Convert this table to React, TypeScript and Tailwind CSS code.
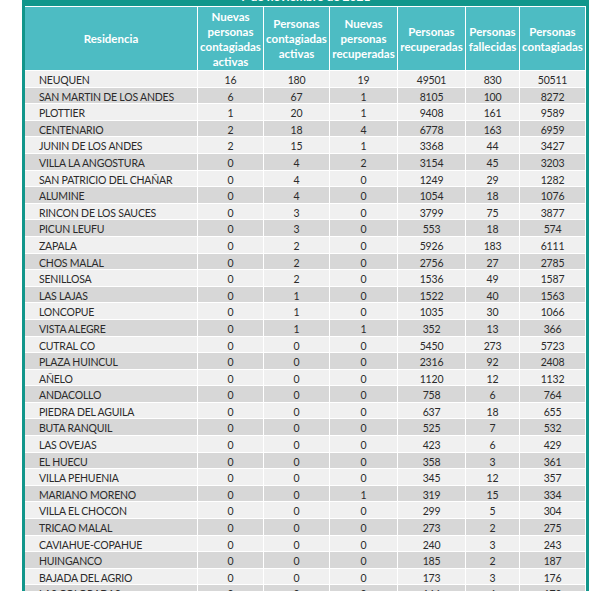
import React from "react";

const rows: [string, number, number, number, number, number, number][] = [
  ["NEUQUEN", 16, 180, 19, 49501, 830, 50511],
  ["SAN MARTIN DE LOS ANDES", 6, 67, 1, 8105, 100, 8272],
  ["PLOTTIER", 1, 20, 1, 9408, 161, 9589],
  ["CENTENARIO", 2, 18, 4, 6778, 163, 6959],
  ["JUNIN DE LOS ANDES", 2, 15, 1, 3368, 44, 3427],
  ["VILLA LA ANGOSTURA", 0, 4, 2, 3154, 45, 3203],
  ["SAN PATRICIO DEL CHAÑAR", 0, 4, 0, 1249, 29, 1282],
  ["ALUMINE", 0, 4, 0, 1054, 18, 1076],
  ["RINCON DE LOS SAUCES", 0, 3, 0, 3799, 75, 3877],
  ["PICUN LEUFU", 0, 3, 0, 553, 18, 574],
  ["ZAPALA", 0, 2, 0, 5926, 183, 6111],
  ["CHOS MALAL", 0, 2, 0, 2756, 27, 2785],
  ["SENILLOSA", 0, 2, 0, 1536, 49, 1587],
  ["LAS LAJAS", 0, 1, 0, 1522, 40, 1563],
  ["LONCOPUE", 0, 1, 0, 1035, 30, 1066],
  ["VISTA ALEGRE", 0, 1, 1, 352, 13, 366],
  ["CUTRAL CO", 0, 0, 0, 5450, 273, 5723],
  ["PLAZA HUINCUL", 0, 0, 0, 2316, 92, 2408],
  ["AÑELO", 0, 0, 0, 1120, 12, 1132],
  ["ANDACOLLO", 0, 0, 0, 758, 6, 764],
  ["PIEDRA DEL AGUILA", 0, 0, 0, 637, 18, 655],
  ["BUTA RANQUIL", 0, 0, 0, 525, 7, 532],
  ["LAS OVEJAS", 0, 0, 0, 423, 6, 429],
  ["EL HUECU", 0, 0, 0, 358, 3, 361],
  ["VILLA PEHUENIA", 0, 0, 0, 345, 12, 357],
  ["MARIANO MORENO", 0, 0, 1, 319, 15, 334],
  ["VILLA EL CHOCON", 0, 0, 0, 299, 5, 304],
  ["TRICAO MALAL", 0, 0, 0, 273, 2, 275],
  ["CAVIAHUE-COPAHUE", 0, 0, 0, 240, 3, 243],
  ["HUINGANCO", 0, 0, 0, 185, 2, 187],
  ["BAJADA DEL AGRIO", 0, 0, 0, 173, 3, 176],
  ["LAS COLORADAS", 0, 0, 0, 166, 4, 170],
];

const headers = [
  "Nuevas personas contagiadas activas",
  "Personas contagiadas activas",
  "Nuevas personas recuperadas",
  "Personas recuperadas",
  "Personas fallecidas",
  "Personas contagiadas",
];

const grid = "grid grid-cols-[172px_65px_65px_67px_67px_53px_65px] gap-x-px";

export default function App() {
  return (
    <div
      className="w-[601px] h-[591px] overflow-hidden bg-white"
      style={{ fontFamily: "Lato, 'Open Sans', sans-serif" }}
    >
      <div className="ml-[22px] w-[567px] border-l-[3px] border-r-[3px] border-[#11968b] bg-white pr-px">
        <div className="-mt-[12px] h-[18px] bg-[#11968b] mr-[-1px] flex items-center justify-center text-[12px] font-bold text-white leading-none">
          7 de noviembre de 2021
        </div>
        <div className={`${grid} mt-px h-[63px]`}>
          <div className="bg-[#4dbcc3] text-white font-bold text-[11.5px] flex items-center justify-center">
            Residencia
          </div>
          {headers.map((h) => (
            <div
              key={h}
              className="bg-[#4dbcc3] text-white font-bold text-[11.5px] leading-[15px] flex items-center justify-center text-center px-[2px]"
            >
              {h}
            </div>
          ))}
        </div>
        <div className="flex flex-col gap-y-px mt-px">
          {rows.map((r, i) => (
            <div
              key={r[0]}
              className={`${grid} h-[15.6px] text-[10.5px] tracking-[-0.2px] text-[#2b2b2b]`}
            >
              {r.map((c, j) => (
                <div
                  key={j}
                  className={`${i % 2 === 0 ? "bg-[#f0f0f0]" : "bg-[#d7d7d7]"} ${
                    j === 0 ? "pl-[14px] text-left" : "text-center"
                  } h-[15.6px] leading-[19.4px] whitespace-nowrap`}
                >
                  {c}
                </div>
              ))}
            </div>
          ))}
        </div>
      </div>
    </div>
  );
}
